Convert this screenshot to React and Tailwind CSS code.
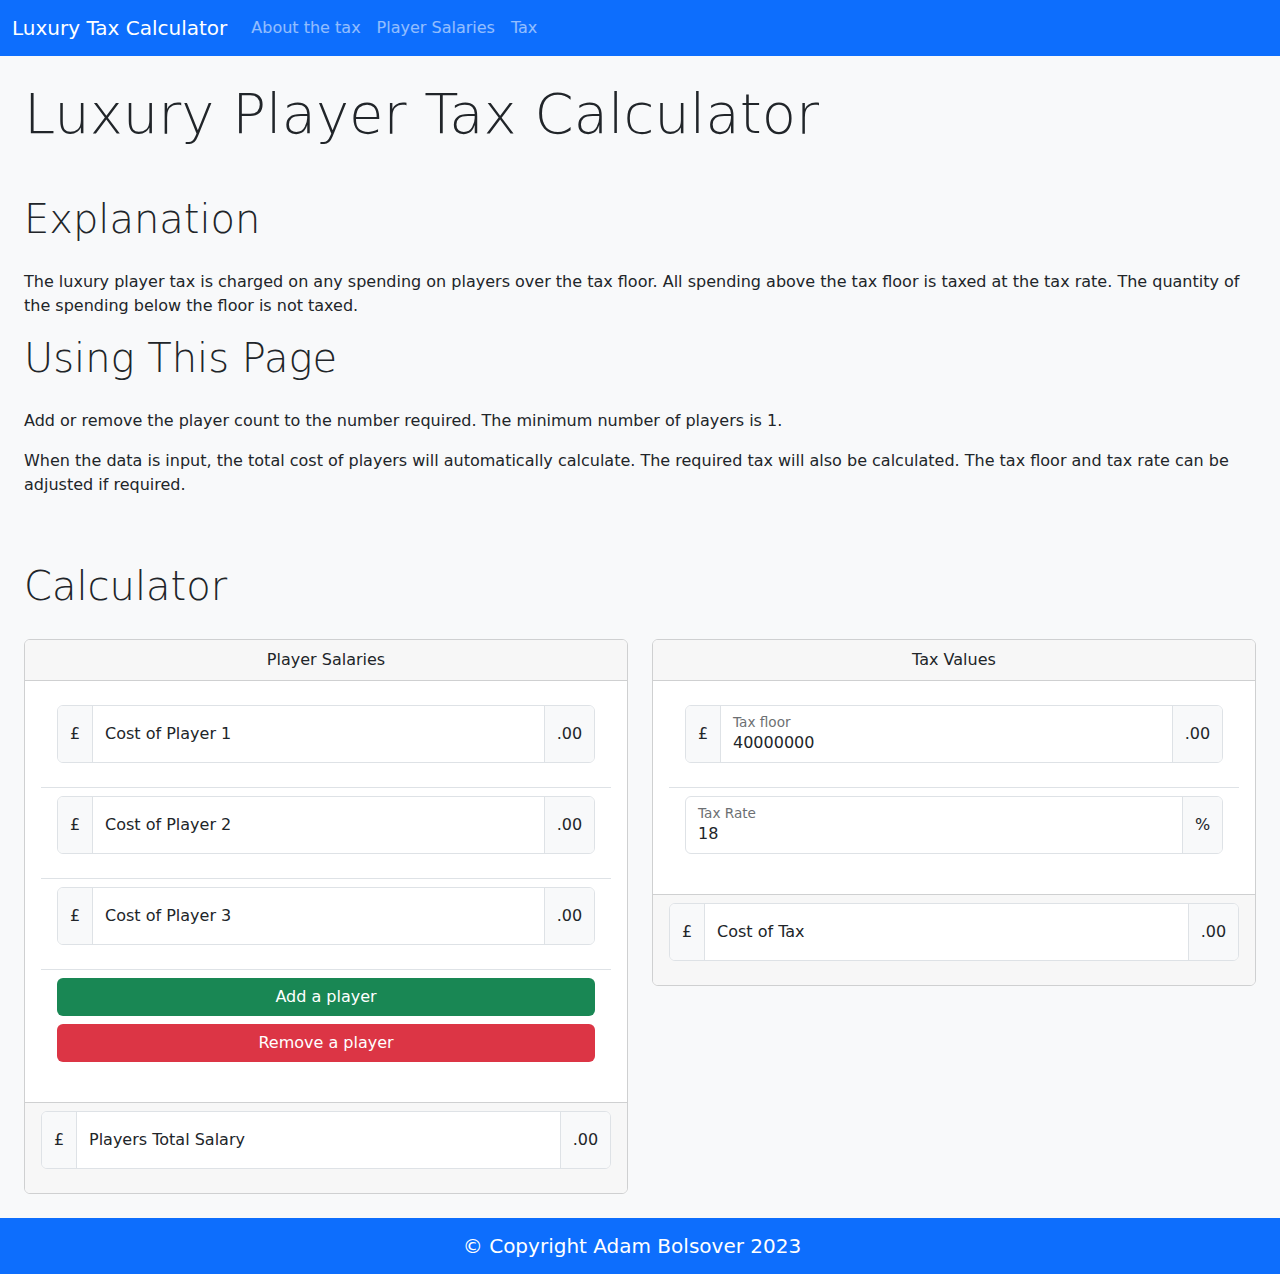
import React from "react";

const font = { fontFamily: '"DejaVu Sans", "Liberation Sans", sans-serif' };

const InputGroup = ({ prefix, suffix, label, value, suffixWide }) => (
  <div className="flex h-[58px] rounded-md border border-[#dee2e6] bg-white overflow-hidden">
    {prefix && (
      <div className="flex w-[35px] shrink-0 items-center justify-center border-r border-[#dee2e6] bg-[#f8f9fa] text-base text-[#212529]">
        {prefix}
      </div>
    )}
    <div className="flex-1 px-3 flex flex-col justify-center">
      {value ? (
        <>
          <span className="text-[13.6px] leading-[20px] text-[#6c6f72] -mt-[1px]">{label}</span>
          <span className="text-base leading-6 text-[#212529] -mt-[1px]">{value}</span>
        </>
      ) : (
        <span className="text-base leading-6 text-[#212529]">{label}</span>
      )}
    </div>
    <div
      className={
        "flex shrink-0 items-center justify-center border-l border-[#dee2e6] bg-[#f8f9fa] text-base text-[#212529] " +
        (suffixWide ? "w-[50px]" : "w-[40px]")
      }
    >
      {suffix}
    </div>
  </div>
);

const Item = ({ children, last }) => (
  <div className={"px-4 pt-2 pb-2 " + (last ? "" : "border-b border-[#dee2e6]")}>
    <div className="mb-4">{children}</div>
  </div>
);

const Card = ({ title, children, footer }) => (
  <div className="rounded-md border border-[#cfd0d1] bg-white overflow-hidden">
    <div className="bg-[#f7f7f7] border-b border-[#cfd0d1] py-2 text-center text-base leading-6 text-[#212529]">
      {title}
    </div>
    <div className="p-4">{children}</div>
    <div className="bg-[#f7f7f7] border-t border-[#cfd0d1] px-4 py-2">
      <div className="mb-4">{footer}</div>
    </div>
  </div>
);

export default function App() {
  return (
    <div className="bg-[#f8f9fa] text-[#212529]" style={font}>
      <nav className="bg-[#0d6efd] h-14 flex items-center px-3">
        <span className="text-xl leading-[30px] text-white mr-4">Luxury Tax Calculator</span>
        <div className="flex text-base text-white/55">
          <span className="px-2">About the tax</span>
          <span className="px-2">Player Salaries</span>
          <span className="px-2">Tax</span>
        </div>
      </nav>

      <main className="px-6 pt-6 pb-6">
        <h1 className="text-[56px] leading-[1.2] font-light mb-[48px]">Luxury Player Tax Calculator</h1>

        <h2 className="text-[40px] leading-[1.2] font-light mb-[27px]">Explanation</h2>
        <p className="text-base leading-6 mb-4">
          The luxury player tax is charged on any spending on players over the tax floor. All spending above the tax
          floor is taxed at the tax rate. The quantity of the spending below the floor is not taxed.
        </p>

        <h2 className="text-[40px] leading-[1.2] font-light mb-[27px]">Using This Page</h2>
        <p className="text-base leading-6 mb-4">
          Add or remove the player count to the number required. The minimum number of players is 1.
        </p>
        <p className="text-base leading-6 mb-4">
          When the data is input, the total cost of players will automatically calculate. The required tax will also be
          calculated. The tax floor and tax rate can be adjusted if required.
        </p>

        <h2 className="text-[40px] leading-[1.2] font-light mt-[65px] mb-[29px]">Calculator</h2>

        <div className="grid grid-cols-2 gap-6 items-start">
          <Card
            title="Player Salaries"
            footer={<InputGroup prefix="£" suffix=".00" suffixWide label="Players Total Salary" />}
          >
            <Item>
              <InputGroup prefix="£" suffix=".00" suffixWide label="Cost of Player 1" />
            </Item>
            <Item>
              <InputGroup prefix="£" suffix=".00" suffixWide label="Cost of Player 2" />
            </Item>
            <Item>
              <InputGroup prefix="£" suffix=".00" suffixWide label="Cost of Player 3" />
            </Item>
            <Item last>
              <div className="flex flex-col gap-2">
                <button className="h-[38px] rounded-md bg-[#198754] text-base text-white">Add a player</button>
                <button className="h-[38px] rounded-md bg-[#dc3545] text-base text-white">Remove a player</button>
              </div>
            </Item>
          </Card>

          <Card title="Tax Values" footer={<InputGroup prefix="£" suffix=".00" suffixWide label="Cost of Tax" />}>
            <Item>
              <InputGroup prefix="£" suffix=".00" suffixWide label="Tax floor" value="40000000" />
            </Item>
            <Item last>
              <InputGroup suffix="%" label="Tax Rate" value="18" />
            </Item>
          </Card>
        </div>
      </main>

      <footer className="bg-[#0d6efd] h-14 flex items-center justify-center pr-4 text-xl text-white">
        © Copyright Adam Bolsover 2023
      </footer>
    </div>
  );
}
